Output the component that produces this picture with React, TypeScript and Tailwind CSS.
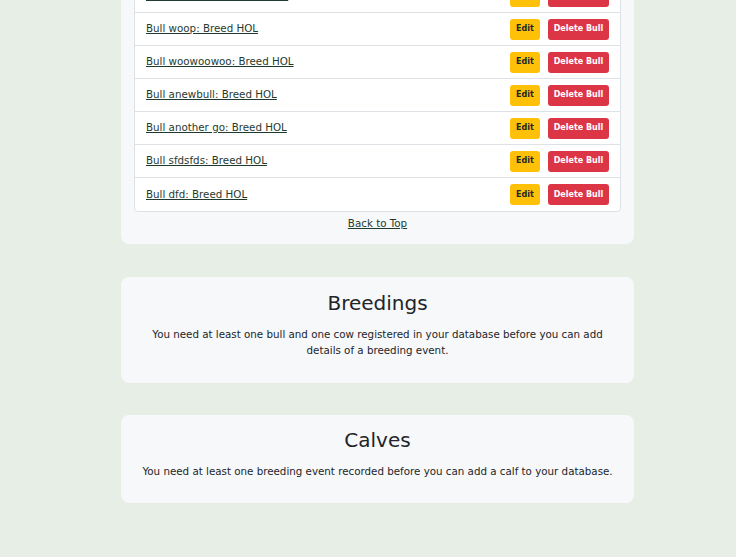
import React from 'react';

const bulls = [
    'Bull hidden one: Breed HOL',
    'Bull woop: Breed HOL',
    'Bull woowoowoo: Breed HOL',
    'Bull anewbull: Breed HOL',
    'Bull another go: Breed HOL',
    'Bull sfdsfds: Breed HOL',
    'Bull dfd: Breed HOL',
];

const BullRow: React.FC<{ name: string; last: boolean }> = ({ name, last }) => (
    <li className={`flex h-[33px] items-center justify-between pl-[11px] pr-[11px] ${last ? '' : 'border-b border-[#dee2e6]'}`}>
        <a href="#" className="text-[10.3px] text-[#1f3a2e] underline">{name}</a>
        <div className="flex gap-[8px]">
            <button className="h-[21px] w-[30px] rounded-[3px] bg-[#ffc107] text-[8px] font-bold text-[#212529]">Edit</button>
            <button className="h-[21px] w-[61px] rounded-[3px] bg-[#dc3545] text-[8px] font-bold text-white">Delete Bull</button>
        </div>
    </li>
);

const InfoCard: React.FC<{ title: string; text: string; className?: string }> = ({ title, text, className }) => (
    <section className={`rounded-[8px] bg-[#f7f8fa] text-center ${className ?? ''}`}>
        <h2 className="text-[20px] leading-[26px] text-[#212529]">{title}</h2>
        <p className="mt-[10px] text-[10.3px] leading-[16px] text-[#212529]">{text}</p>
    </section>
);

export default function App() {
    return (
        <div className="min-h-[557px] overflow-hidden bg-[#e6eee6] font-['DejaVu_Sans',sans-serif]">
            <div className="ml-[121px] w-[513px] pb-10">
                <section className="-mt-[35px] rounded-b-[8px] bg-[#f7f8fa] px-[13px] pt-[14px] pb-[13px]">
                    <ul className="rounded-[4px] border border-[#dee2e6] bg-white">
                        {bulls.map((b, i) => (
                            <BullRow key={b} name={b} last={i === bulls.length - 1} />
                        ))}
                    </ul>
                    <div className="mt-[3px] text-center text-[10.3px] leading-[16px]">
                        <a href="#" className="text-[#1f3a2e] underline">Back to Top</a>
                    </div>
                </section>

                <InfoCard
                    className="mt-[33px] h-[106px] px-6 pt-[13px]"
                    title="Breedings"
                    text="You need at least one bull and one cow registered in your database before you can add details of a breeding event."
                />
                <InfoCard
                    className="mt-[32px] h-[88px] px-3 pt-[12px]"
                    title="Calves"
                    text="You need at least one breeding event recorded before you can add a calf to your database."
                />
            </div>
        </div>
    );
}
